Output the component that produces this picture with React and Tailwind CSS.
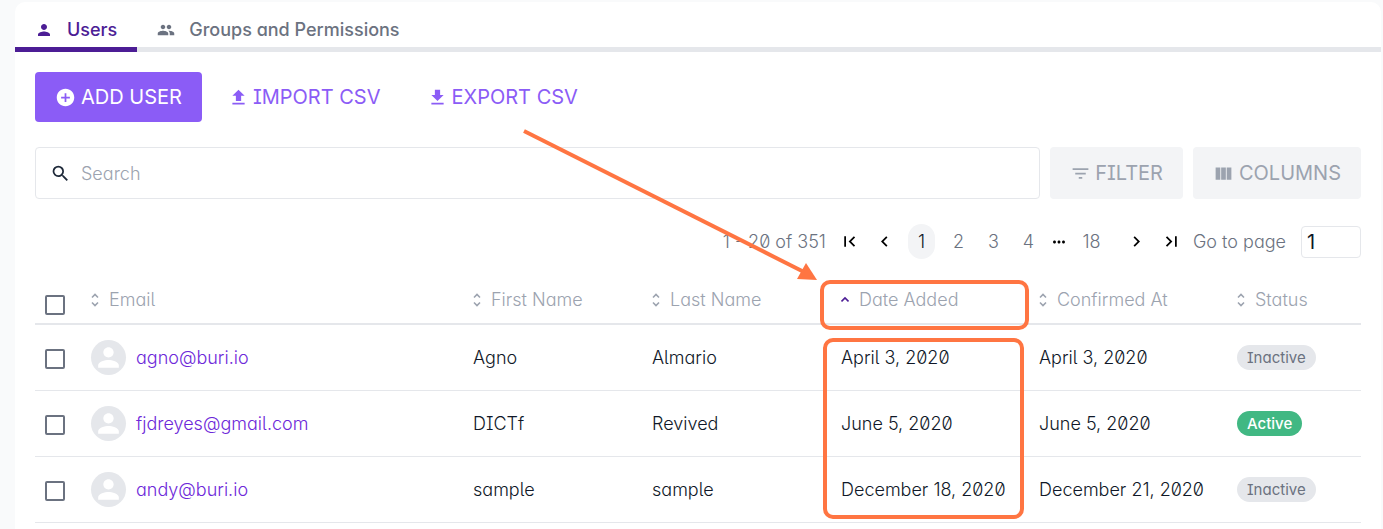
import { useState } from 'react';
import {
  MdPerson, MdPeople, MdAddCircle, MdSearch, MdFilterList, MdViewColumn,
  MdFirstPage, MdLastPage, MdChevronLeft, MdChevronRight, MdMoreHoriz,
} from 'react-icons/md';

const users = [
  { email: 'agno@buri.io', first: 'Agno', last: 'Almario', added: 'April 3, 2020', confirmed: 'April 3, 2020', active: false },
  { email: 'fjdreyes@gmail.com', first: 'DICTf', last: 'Revived', added: 'June 5, 2020', confirmed: 'June 5, 2020', active: true },
  { email: 'andy@buri.io', first: 'sample', last: 'sample', added: 'December 18, 2020', confirmed: 'December 21, 2020', active: false },
];

const columns = [
  { label: 'Email', width: '' },
  { label: 'First Name', width: 'w-[179px]' },
  { label: 'Last Name', width: 'w-[189px]' },
  { label: 'Date Added', width: 'w-[198px]', sorted: true },
  { label: 'Confirmed At', width: 'w-[198px]' },
  { label: 'Status', width: 'w-[134px]' },
];

function TransferIcon({ up }) {
  return (
    <svg viewBox="0 0 24 24" className="size-[21px]" fill="currentColor" aria-hidden="true">
      <path d={up ? 'M9 16v-6H5l7-7 7 7h-4v6H9zM5 20v-2h14v2H5z' : 'M5 20h14v-2H5v2zM19 9h-4V3H9v6H5l7 7 7-7z'} />
    </svg>
  );
}

function SortIcon({ sorted }) {
  return (
    <svg viewBox="0 0 8 14" className={`h-[14px] w-2 ${sorted ? 'text-[#4c1d95]' : ''}`} fill="none" stroke="currentColor" strokeWidth="1.6" aria-hidden="true">
      {sorted ? <path d="M0.5 8.5 4 5l3.5 3.5" /> : <path d="M1 4.5 4 1.5l3 3M1 9.5l3 3 3-3" />}
    </svg>
  );
}

function Checkbox({ label }) {
  return (
    <input
      type="checkbox"
      aria-label={label}
      className="block size-5 appearance-none rounded-[2px] border-2 border-[#6b7280] bg-white checked:bg-[#8b5cf6]"
    />
  );
}

function PageButton({ label, children, active }) {
  return (
    <button aria-label={label} className="flex h-[35px] w-[35px] items-center justify-center">
      <span className={`flex h-[35px] w-[27px] items-center justify-center rounded-full ${active ? 'bg-gray-100 text-gray-900' : ''}`}>
        {children}
      </span>
    </button>
  );
}

export default function App() {
  const [search, setSearch] = useState('');
  const [page, setPage] = useState('1');

  return (
    <div className="min-h-screen overflow-hidden bg-gray-50 pt-[2px] pr-[2px] pl-[15px] font-['Inter',sans-serif] text-[18px] leading-[27px] font-[350] text-gray-900 [font-feature-settings:'cv05','cv08','cv11','zero']">
      <main className="relative min-h-[527px] rounded-t-[10px] bg-white">
        {/* Tabs */}
        <nav className="flex border-b-[5px] border-gray-200 font-medium">
          <a href="#users" className="-mb-[5px] flex h-[50px] items-center gap-[14px] border-b-[5px] border-[#4c1d95] px-5 pt-[10px] text-[#4c1d95]">
            <MdPerson className="size-[18px]" />
            Users
          </a>
          <a href="#groups" className="flex h-[45px] items-center gap-[14px] px-5 pt-[10px] text-[#6b7280]">
            <MdPeople className="size-[18px]" />
            Groups and Permissions
          </a>
        </nav>

        <div className="px-5 pt-5">
          <div className="flex gap-[6px] text-[20px] font-normal text-[#8b5cf6]">
            <button className="flex h-[50px] items-center gap-[5px] rounded bg-[#8b5cf6] px-5 text-white">
              <MdAddCircle className="size-[21px]" />
              ADD USER
            </button>
            <button className="flex h-[50px] items-center gap-1 px-5">
              <TransferIcon up />
              IMPORT CSV
            </button>
            <button className="flex h-[50px] items-center gap-1 px-5">
              <TransferIcon />
              EXPORT CSV
            </button>
          </div>

          {/* Search and table options */}
          <div className="mt-[25px] flex gap-[10px]">
            <label className="flex h-[52px] grow items-center gap-[10px] rounded border border-gray-200 px-[14px]">
              <MdSearch className="size-[21px] text-gray-800" />
              <input
                type="text"
                aria-label="Search"
                placeholder="Search"
                value={search}
                onChange={(e) => setSearch(e.target.value)}
                className="min-w-0 grow outline-none placeholder:text-[#9ca3af]"
              />
            </label>
            <button className="flex h-[52px] items-center gap-1 rounded bg-gray-100 px-5 text-[20px] font-normal text-[#9ca3af]">
              <MdFilterList className="size-[21px]" />
              FILTER
            </button>
            <button className="flex h-[52px] items-center gap-[5px] rounded bg-gray-100 px-5 text-[20px] font-normal text-[#9ca3af]">
              <MdViewColumn className="size-[21px]" />
              COLUMNS
            </button>
          </div>

          {/* Pagination */}
          <div className="mt-[25px] flex items-center justify-end text-[#6b7280]">
            <span className="mr-[6px]">1 - 20 of 351</span>
            <PageButton label="First page"><MdFirstPage className="size-[21px] text-black" /></PageButton>
            <PageButton label="Previous page"><MdChevronLeft className="size-[21px] text-black" /></PageButton>
            <div className="px-[2px]"><PageButton active>1</PageButton></div>
            <PageButton>2</PageButton>
            <PageButton>3</PageButton>
            <PageButton>4</PageButton>
            <MdMoreHoriz className="mx-1 size-[18px] text-black" />
            <div className="px-[2px]"><PageButton>18</PageButton></div>
            <div className="pl-2"><PageButton label="Next page"><MdChevronRight className="size-[21px] text-black" /></PageButton></div>
            <PageButton label="Last page"><MdLastPage className="size-[21px] text-black" /></PageButton>
            <label htmlFor="page" className="mr-[15px] ml-1">Go to page</label>
            <input
              id="page"
              type="text"
              value={page}
              onChange={(e) => setPage(e.target.value)}
              className="h-8 w-[60px] rounded border border-gray-200 px-[5px] text-[20px] font-normal text-gray-900"
            />
          </div>

          <table className="mt-[27px] w-full table-fixed border-collapse text-left">
            <thead>
              <tr className="border-b-2 border-gray-200 text-[#9ca3af]">
                <th className="w-[46px] px-[10px] pb-2 align-bottom"><Checkbox label="Select all users" /></th>
                {columns.map((c) => (
                  <th key={c.label} className={`${c.width} px-[10px] pb-[10px] font-[350]`}>
                    <button className="flex items-center gap-[10px]">
                      <SortIcon sorted={c.sorted} />
                      {c.label}
                    </button>
                  </th>
                ))}
              </tr>
            </thead>
            <tbody>
              {users.map((u) => (
                <tr key={u.email} className="h-[66px] border-b border-gray-200">
                  <td className="px-[10px] pt-1"><Checkbox label={`Select ${u.email}`} /></td>
                  <td className="px-[10px]">
                    <div className="flex items-center gap-[10px]">
                      <span className="flex size-[35px] items-center justify-center rounded-full bg-gray-200 text-white">
                        <MdPerson className="size-[31px]" />
                      </span>
                      <a href={`mailto:${u.email}`} className="text-[#6d28d9]">{u.email}</a>
                    </div>
                  </td>
                  <td className="px-[10px]">{u.first}</td>
                  <td className="px-[10px]">{u.last}</td>
                  <td className="px-[10px]">{u.added}</td>
                  <td className="px-[10px]">{u.confirmed}</td>
                  <td className="px-[10px]">
                    {u.active ? (
                      <span className="block h-[25px] w-fit rounded-full bg-[#41b883] px-[10px] text-[15px] leading-[25px] font-medium text-white">Active</span>
                    ) : (
                      <span className="block h-[25px] w-fit rounded-full bg-gray-200 px-[10px] text-[15px] leading-[25px] font-normal text-[#6b7280]">Inactive</span>
                    )}
                  </td>
                </tr>
              ))}
            </tbody>
          </table>
        </div>

        {/* Callouts over the Date Added column */}
        <svg viewBox="0 0 300 156" className="pointer-events-none absolute top-[125px] right-[561px] h-[156px] w-[300px]" aria-hidden="true">
          <path d="M4 4 284 145" stroke="#ff7542" strokeWidth="4" />
          <path d="m297 153-20-1 9-16z" fill="#ff7542" />
        </svg>
        <div className="pointer-events-none absolute top-[278px] right-[352px] h-[50px] w-[209px] rounded-[10px] border-4 border-[#ff7542]" />
        <div className="pointer-events-none absolute top-[336px] right-[357px] h-[181px] w-[201px] rounded-[10px] border-4 border-[#ff7542]" />
      </main>
    </div>
  );
}
